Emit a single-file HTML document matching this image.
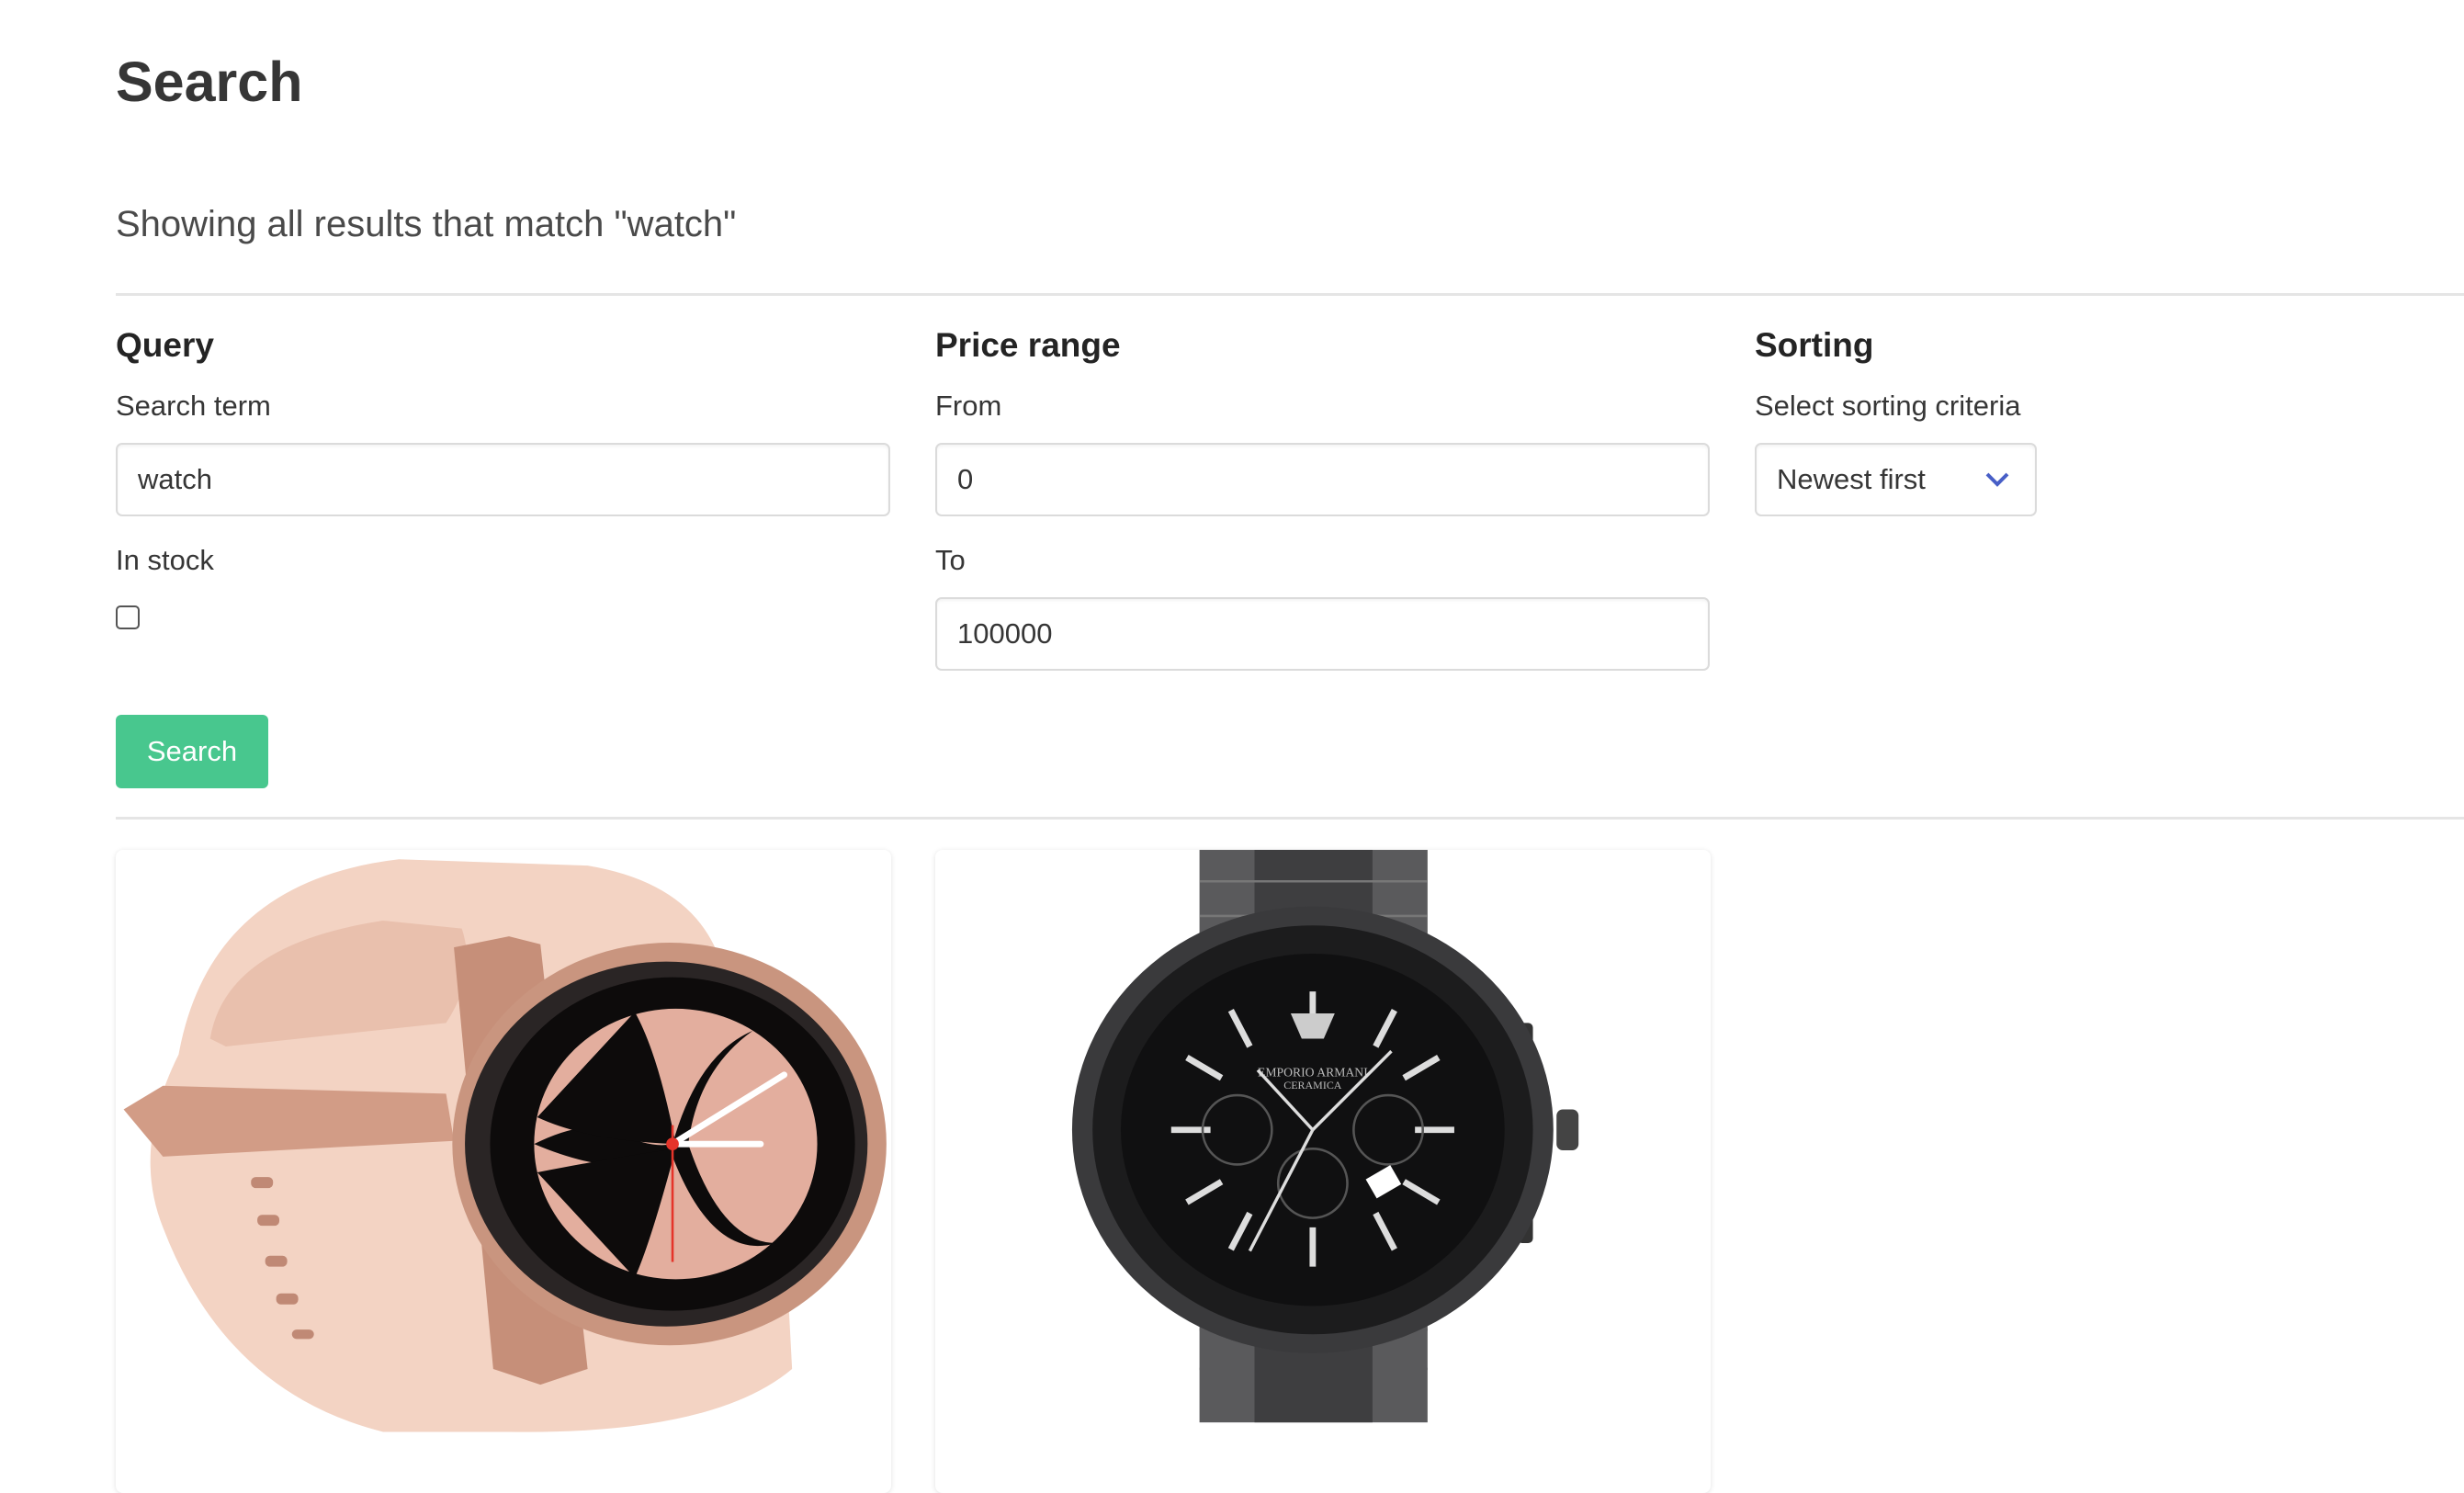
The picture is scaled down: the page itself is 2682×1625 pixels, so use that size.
<!DOCTYPE html>
<html><head><meta charset="utf-8"><style>
*{box-sizing:border-box;margin:0;padding:0}
body{width:2682px;height:1578px;overflow:hidden;background:#fff;font-family:"Liberation Sans",Arial,sans-serif;color:#363636;position:relative}
.a{position:absolute;white-space:nowrap}
.h{font-weight:bold;font-size:37px;color:#242424}
.l{font-size:31px;color:#363636}
.in{position:absolute;border:2px solid #dbdbdb;border-radius:7px;background:#fff;box-shadow:inset 0 2px 3px rgba(10,10,10,.05);font-size:31px;color:#363636;padding-left:22px;display:flex;align-items:center}
.hr{position:absolute;left:126px;right:0;height:3px;background:#e5e5e5}
.card{position:absolute;top:925px;width:844px;height:700px;background:#fff;border-radius:8px;box-shadow:0 1px 6px rgba(10,10,10,.12);overflow:hidden}
</style></head><body>
<div class="a" style="left:126px;top:54px;font-size:61px;font-weight:bold;color:#363636">Search</div>
<div class="a" style="left:126px;top:222px;font-size:40px;color:#4a4a4a">Showing all results that match "watch"</div>
<div class="hr" style="top:319px"></div>

<div class="a h" style="left:126px;top:355px">Query</div>
<div class="a l" style="left:126px;top:424px">Search term</div>
<div class="in" style="left:126px;top:482px;width:843px;height:80px">watch</div>
<div class="a l" style="left:126px;top:592px">In stock</div>
<div class="a" style="left:126px;top:659px;width:26px;height:26px;border:2px solid #555;border-radius:5px"></div>
<div class="a" style="left:126px;top:778px;width:166px;height:80px;background:#48c78e;border-radius:6px;color:#fff;font-size:31px;display:flex;align-items:center;justify-content:center">Search</div>

<div class="a h" style="left:1018px;top:355px">Price range</div>
<div class="a l" style="left:1018px;top:424px">From</div>
<div class="in" style="left:1018px;top:482px;width:843px;height:80px">0</div>
<div class="a l" style="left:1018px;top:592px">To</div>
<div class="in" style="left:1018px;top:650px;width:843px;height:80px">100000</div>

<div class="a h" style="left:1910px;top:355px">Sorting</div>
<div class="a l" style="left:1910px;top:424px">Select sorting criteria</div>
<div class="in" style="left:1910px;top:482px;width:307px;height:80px">Newest first
<svg style="position:absolute;left:248px;top:28px" width="28" height="20" viewBox="0 0 28 20"><path d="M3 4 L14 15 L25 4" fill="none" stroke="#485fc7" stroke-width="4"/></svg></div>

<div class="hr" style="top:889px"></div>

<div class="card" style="left:126px">
<svg width="844" height="654" viewBox="0 0 493 382">
<path d="M40,130 Q60,20 180,6 L300,10 Q360,20 380,60 L420,140 L430,330 Q380,372 250,370 L170,370 Q70,345 30,240 Q10,190 40,130Z" fill="#f3d3c3"/>
<path d="M60,120 Q70,60 170,45 L220,50 Q230,80 210,110 L70,125Z" fill="#e9c0ad"/>
<g fill="#c08975"><rect x="86" y="208" width="14" height="7" rx="3"/><rect x="90" y="232" width="14" height="7" rx="3"/><rect x="95" y="258" width="14" height="7" rx="3"/><rect x="102" y="282" width="14" height="7" rx="3"/><rect x="112" y="305" width="14" height="6" rx="3"/></g>
<path d="M5,165 L30,150 L210,155 L215,185 L30,195 Z" fill="#d29c86"/>
<path d="M215,62 L250,55 L270,60 L300,330 L270,340 L240,330 Z" fill="#c68f79"/>
<ellipse cx="352" cy="187" rx="138" ry="128" fill="#c9957f"/>
<ellipse cx="350" cy="187" rx="128" ry="116" fill="#2a2525"/>
<ellipse cx="354" cy="187" rx="116" ry="106" fill="#0d0b0b"/>
<ellipse cx="356" cy="187" rx="90" ry="86" fill="#e3ae9e"/>
<path d="M266,187 Q300,170 320,180 Q340,190 354,187 Q370,130 405,115 Q370,140 364,187 Q385,250 420,250 Q380,262 354,195 Q320,210 266,187Z" fill="#0d0b0b"/>
<path d="M330,103 Q345,130 356,187 Q300,185 268,170Z M268,205 Q320,195 356,190 Q340,250 330,272Z" fill="#0d0b0b"/>
<line x1="354" y1="187" x2="425" y2="143" stroke="#fff" stroke-width="4" stroke-linecap="round"/>
<line x1="354" y1="187" x2="410" y2="187" stroke="#fff" stroke-width="4" stroke-linecap="round"/>
<line x1="354" y1="175" x2="354" y2="262" stroke="#e5342a" stroke-width="1.5"/>
<circle cx="354" cy="187" r="4" fill="#e5342a"/>
</svg></div>

<div class="card" style="left:1018px">
<svg width="844" height="654" viewBox="0 0 493 382">
<rect x="168" y="0" width="145" height="80" fill="#5a5a5c"/>
<rect x="203" y="0" width="75" height="80" fill="#3e3e40"/>
<g stroke="#777" stroke-width="1.5"><line x1="168" y1="20" x2="313" y2="20"/><line x1="168" y1="42" x2="313" y2="42"/><line x1="168" y1="62" x2="313" y2="62"/><line x1="168" y1="305" x2="313" y2="305"/><line x1="168" y1="330" x2="313" y2="330"/></g>
<rect x="168" y="280" width="145" height="84" fill="#5a5a5c"/>
<rect x="203" y="280" width="75" height="84" fill="#3e3e40"/>
<rect x="395" y="165" width="14" height="26" rx="4" fill="#444"/>
<rect x="370" y="110" width="10" height="20" rx="3" fill="#333"/><rect x="370" y="230" width="10" height="20" rx="3" fill="#333"/>
<ellipse cx="240" cy="178" rx="153" ry="142" fill="#3a3a3c"/>
<ellipse cx="240" cy="178" rx="140" ry="130" fill="#1c1c1d"/>
<ellipse cx="240" cy="178" rx="122" ry="112" fill="#101011"/>
<g stroke="#ddd" stroke-width="4"><line x1="240" y1="90" x2="240" y2="115"/><line x1="240" y1="240" x2="240" y2="265"/><line x1="150" y1="178" x2="175" y2="178"/><line x1="305" y1="178" x2="330" y2="178"/><line x1="188" y1="102" x2="200" y2="125"/><line x1="292" y1="102" x2="280" y2="125"/><line x1="160" y1="132" x2="182" y2="145"/><line x1="320" y1="132" x2="298" y2="145"/><line x1="160" y1="224" x2="182" y2="211"/><line x1="320" y1="224" x2="298" y2="211"/><line x1="188" y1="254" x2="200" y2="231"/><line x1="292" y1="254" x2="280" y2="231"/></g>
<path d="M226,104 L254,104 L247,120 L233,120Z" fill="#ccc"/>
<text x="240" y="144" font-size="8" fill="#bbb" text-anchor="middle" font-family="Liberation Serif">EMPORIO ARMANI</text>
<text x="240" y="152" font-size="7" fill="#bbb" text-anchor="middle" font-family="Liberation Serif">CERAMICA</text>
<g fill="none" stroke="#555" stroke-width="1.5"><circle cx="192" cy="178" r="22"/><circle cx="288" cy="178" r="22"/><circle cx="240" cy="212" r="22"/></g>
<rect x="276" y="204" width="18" height="14" fill="#fff" transform="rotate(-30 285 211)"/>
<g stroke="#ddd" stroke-width="2"><line x1="240" y1="178" x2="290" y2="128"/><line x1="240" y1="178" x2="205" y2="140"/><line x1="240" y1="178" x2="200" y2="255"/></g>
</svg></div>
</body></html>
